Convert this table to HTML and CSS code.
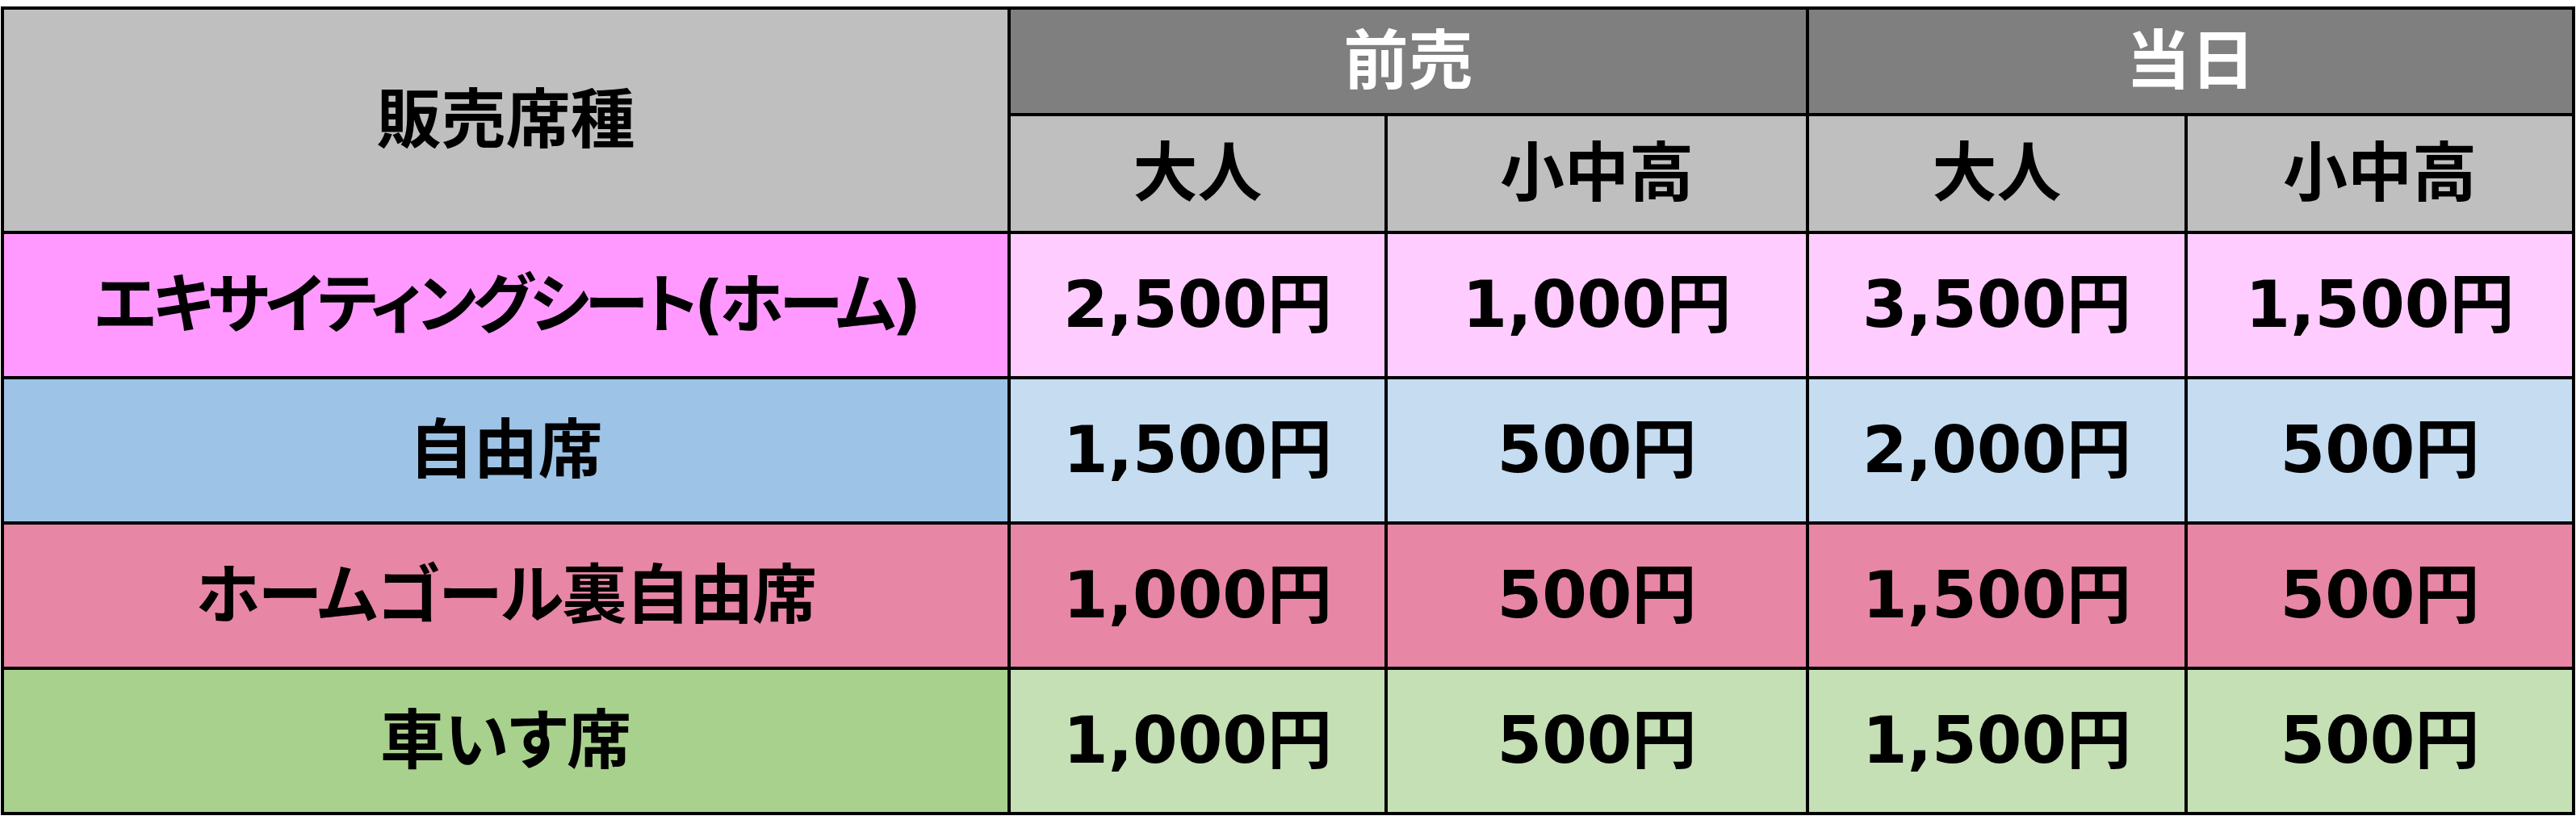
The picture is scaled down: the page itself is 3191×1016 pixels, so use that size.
FILE: index.html
```html
<!DOCTYPE html>
<html lang="ja">
<head>
<meta charset="utf-8">
<title>料金表</title>
<link rel="stylesheet" href="styles.css">
</head>
<body>
<div class="price-table">
  <div class="cell head-main span-rows">販売席種</div>
  <div class="cell head-dark span-cols">前売</div>
  <div class="cell head-dark span-cols">当日</div>
  <div class="cell head-sub">大人</div>
  <div class="cell head-sub">小中高</div>
  <div class="cell head-sub">大人</div>
  <div class="cell head-sub">小中高</div>

  <div class="cell label pink-l tight">エキサイティングシート(ホーム)</div>
  <div class="cell pink-d">2,500円</div>
  <div class="cell pink-d">1,000円</div>
  <div class="cell pink-d">3,500円</div>
  <div class="cell pink-d">1,500円</div>

  <div class="cell label blue-l">自由席</div>
  <div class="cell blue-d">1,500円</div>
  <div class="cell blue-d">500円</div>
  <div class="cell blue-d">2,000円</div>
  <div class="cell blue-d">500円</div>

  <div class="cell label rose-l snug">ホームゴール裏自由席</div>
  <div class="cell rose-d">1,000円</div>
  <div class="cell rose-d">500円</div>
  <div class="cell rose-d">1,500円</div>
  <div class="cell rose-d">500円</div>

  <div class="cell label green-l">車いす席</div>
  <div class="cell green-d">1,000円</div>
  <div class="cell green-d">500円</div>
  <div class="cell green-d">1,500円</div>
  <div class="cell green-d">500円</div>
</div>
</body>
</html>
```
FILE: styles.css
```css
html, body {
  margin: 0;
  background: #ffffff;
}
body {
  padding: 8px 0 0 1px;
  font-family: "DejaVu Sans", "Noto Sans CJK JP", sans-serif;
  font-weight: bold;
  font-feature-settings: "palt";
}
.price-table {
  display: grid;
  width: 3189px;
  box-sizing: border-box;
  grid-template-columns: 1243px 463px 518px 465px 476px;
  grid-template-rows: 128px 142px 176px 176px 176px 176px;
  gap: 4px;
  padding: 4px;
  background: #000000;
}
.cell {
  display: flex;
  align-items: center;
  justify-content: center;
  font-size: 80px;
  line-height: 1;
  color: #000000;
  white-space: nowrap;
}
.tight { letter-spacing: -5px; }
.snug { letter-spacing: -1.5px; }
.span-rows { grid-row: span 2; }
.span-cols { grid-column: span 2; }
.head-main { background: #bfbfbf; }
.head-dark { background: #7f7f7f; color: #ffffff; }
.head-sub { background: #bfbfbf; }
.pink-l { background: #ff99ff; }
.pink-d { background: #ffccff; }
.blue-l { background: #9dc3e6; }
.blue-d { background: #c5dcf1; }
.rose-l { background: #e886a6; }
.rose-d { background: #e886a6; }
.green-l { background: #a9d18e; }
.green-d { background: #c5e0b4; }
```
